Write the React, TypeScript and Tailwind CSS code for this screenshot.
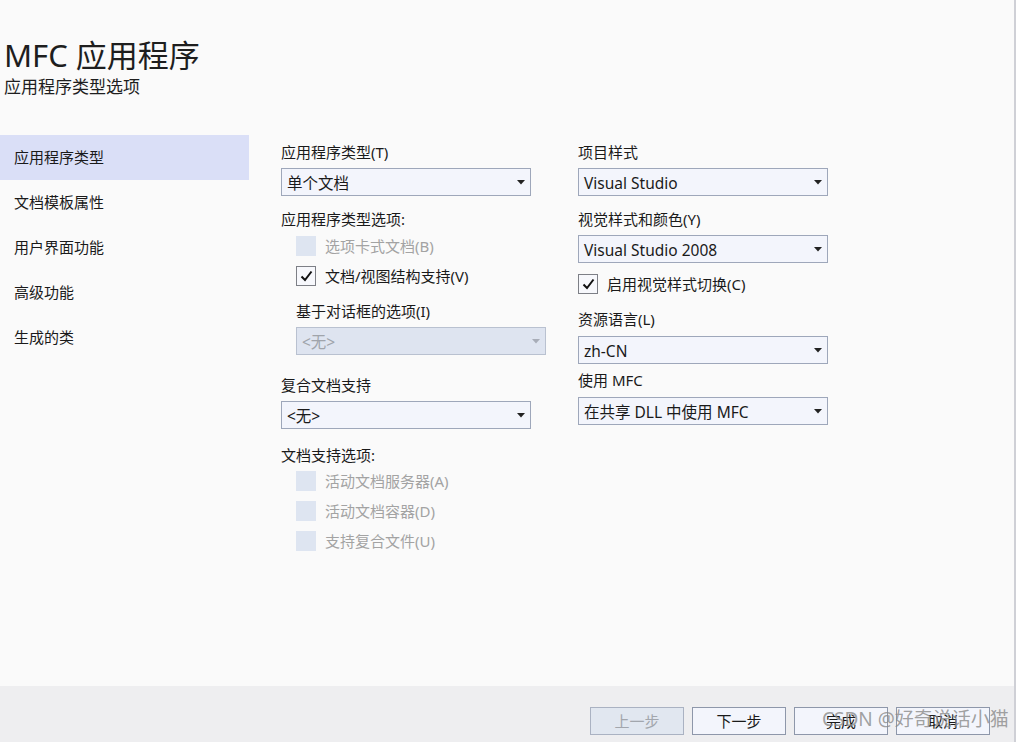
import React from "react";

const font = { fontFamily: '"Noto Sans", "Noto Sans CJK SC", sans-serif' };

function Arrow({ disabled }: { disabled?: boolean }) {
  return (
    <svg width="8" height="5" viewBox="0 0 8 5" className="shrink-0">
      <path d="M0 0 H8 L4 4.5 Z" fill={disabled ? "#a8adb8" : "#222"} />
    </svg>
  );
}

function Select({ value, disabled, className = "" }: { value: string; disabled?: boolean; className?: string }) {
  return (
    <div
      className={
        "flex items-center justify-between h-[28px] w-[250px] pl-[5px] pr-[5px] border text-[15.5px] leading-none " +
        (disabled
          ? "bg-[#dee4f0] border-[#b9c1d0] text-[#a0a4ab]"
          : "bg-[#f3f5fc] border-[#9ea7ba] text-[#1a1a1a]") +
        " " +
        className
      }
    >
      <span className="pt-[3px]">{value}</span>
      <Arrow disabled={disabled} />
    </div>
  );
}

function Check({ label, checked, disabled, className = "" }: { label: string; checked?: boolean; disabled?: boolean; className?: string }) {
  return (
    <div className={"flex items-center h-[20px] gap-[9px] " + className}>
      {disabled ? (
        <div className="w-[20px] h-[20px] bg-[#dee5f1]" />
      ) : (
        <div className="w-[20px] h-[20px] border border-[#7d7f86] bg-[#f7f8fc] flex items-center justify-center">
          {checked && (
            <svg width="13" height="12" viewBox="0 0 13 12">
              <path d="M1.5 6.5 L5 10 L11.5 1.5" stroke="#111" strokeWidth="2" fill="none" />
            </svg>
          )}
        </div>
      )}
      <span className={"text-[15px] leading-none " + (disabled ? "text-[#a3a3a3]" : "text-[#1a1a1a]")}>{label}</span>
    </div>
  );
}

function Label({ children, className = "" }: { children: React.ReactNode; className?: string }) {
  return <div className={"text-[15px] leading-[20px] text-[#1a1a1a] " + className}>{children}</div>;
}

function Btn({ label, disabled }: { label: string; disabled?: boolean }) {
  return (
    <div
      className={
        "w-[94px] h-[28px] flex items-center justify-center border text-[15px] " +
        (disabled ? "bg-[#e1e7f0] border-[#aab2c2] text-[#a2a6ad]" : "bg-[#f3f5fc] border-[#8e97aa] text-[#1a1a1a]")
      }
    >
      {label}
    </div>
  );
}

const navItems = ["应用程序类型", "文档模板属性", "用户界面功能", "高级功能", "生成的类"];

export default function App() {
  return (
    <div className="flex w-[1028px] h-[742px] overflow-hidden bg-white" style={font}>
      <div className="w-[1016px] h-full flex flex-col bg-[#fafafa] border-r-2 border-[#cfd0d6]">
        <div className="h-[135px] shrink-0 pl-[4px] pt-[36px]">
          <div className="text-[31px] leading-[38px] text-[#1e1e1e]">MFC 应用程序</div>
          <div className="text-[17px] leading-[24px] text-[#1e1e1e] pt-[1px]">应用程序类型选项</div>
        </div>
        <div className="flex-1 flex">
          <div className="w-[249px] shrink-0">
            {navItems.map((n, i) => (
              <div
                key={n}
                className={
                  "h-[45px] flex items-center pl-[14px] text-[15px] text-[#1a1a1a] " + (i === 0 ? "bg-[#dadff7]" : "")
                }
              >
                {n}
              </div>
            ))}
          </div>
          <div className="w-[329px] shrink-0 pl-[32px] pt-[7px]">
            <Label>应用程序类型(T)</Label>
            <Select value="单个文档" className="mt-[6px]" />
            <Label className="mt-[13px]">应用程序类型选项:</Label>
            <div className="pl-[15px]">
              <Check label="选项卡式文档(B)" disabled className="mt-[7px]" />
              <Check label="文档/视图结构支持(V)" checked className="mt-[10px]" />
              <Label className="mt-[15px]">基于对话框的选项(I)</Label>
              <Select value="<无>" disabled className="mt-[6px]" />
            </div>
            <Label className="mt-[20px]">复合文档支持</Label>
            <Select value="<无>" className="mt-[6px]" />
            <Label className="mt-[16px]">文档支持选项:</Label>
            <div className="pl-[15px]">
              <Check label="活动文档服务器(A)" disabled className="mt-[6px]" />
              <Check label="活动文档容器(D)" disabled className="mt-[10px]" />
              <Check label="支持复合文件(U)" disabled className="mt-[10px]" />
            </div>
          </div>
          <div className="pt-[7px]">
            <Label>项目样式</Label>
            <Select value="Visual Studio" className="mt-[6px]" />
            <Label className="mt-[13px]">视觉样式和颜色(Y)</Label>
            <Select value="Visual Studio 2008" className="mt-[6px]" />
            <Check label="启用视觉样式切换(C)" checked className="mt-[11px]" />
            <Label className="mt-[15px]">资源语言(L)</Label>
            <Select value="zh-CN" className="mt-[7px]" />
            <Label className="mt-[6px]">使用 MFC</Label>
            <Select value="在共享 DLL 中使用 MFC" className="mt-[7px]" />
          </div>
        </div>
        <div className="h-[56px] shrink-0 bg-[#eeeef0] flex items-start justify-end gap-[8px] pt-[21px] pr-[24px] relative">
          <Btn label="上一步" disabled />
          <Btn label="下一步" />
          <Btn label="完成" />
          <Btn label="取消" />
          <div className="absolute left-[822px] top-[24px] text-[19px] leading-none text-[#8a8a8a]/80 pointer-events-none whitespace-nowrap">
            CSDN @好奇说话小猫
          </div>
        </div>
      </div>
      <div className="flex-1 bg-white" />
    </div>
  );
}
